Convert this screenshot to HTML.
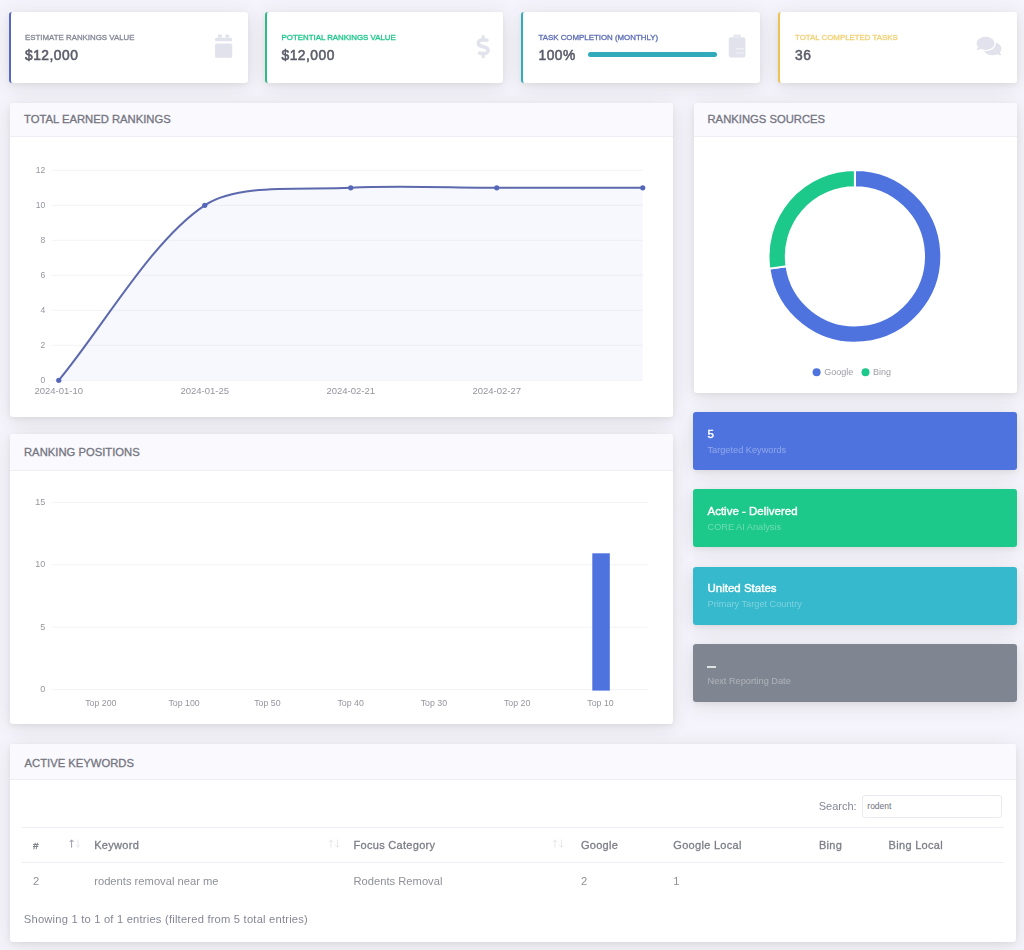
<!DOCTYPE html>
<html><head><meta charset="utf-8">
<style>
*{box-sizing:border-box;margin:0;padding:0}
html,body{width:1024px;height:950px;overflow:hidden}
body{background:#f5f4fc;font-family:"Liberation Sans",sans-serif;color:#858796;position:relative}
.abs{position:absolute}
.card{position:absolute;background:#fff;border-radius:3px;box-shadow:0 2px 5px rgba(62,64,40,.07),0 3px 20px rgba(62,64,40,.12)}
.bl{border-left:2.5px solid}
.lbl{position:absolute;font-size:7.88px;font-weight:normal;-webkit-text-stroke-width:.3px;text-transform:uppercase;white-space:nowrap;line-height:1}
.val{position:absolute;font-size:13.8px;font-weight:normal;-webkit-text-stroke-width:.55px;color:#5a5c69;white-space:nowrap;letter-spacing:.5px;line-height:1}
.hdr{position:absolute;left:0;top:0;right:0;background:#f9f9fe;border-bottom:1px solid #eceef3;border-radius:3px 3px 0 0}
.htxt{position:absolute;left:14.5px;font-size:11.25px;font-weight:normal;-webkit-text-stroke-width:.3px;color:#747580;white-space:nowrap;text-transform:uppercase;line-height:1}
.ax{position:absolute;font-size:8.5px;color:#94959f;white-space:nowrap;line-height:11px}
.ya{text-align:right}
.xa{width:60px;text-align:center}
.cc{position:absolute;left:693px;width:323.5px;height:58.3px;border-radius:3px;color:#fff;box-shadow:0 2px 5px rgba(62,64,40,.07),0 3px 20px rgba(62,64,40,.12)}
.cc .t{position:absolute;left:14.5px;top:16.6px;font-size:11.5px;font-weight:normal;-webkit-text-stroke-width:.4px;white-space:nowrap;line-height:1}
.cc .s{position:absolute;left:14.5px;top:33.5px;font-size:9.2px;color:rgba(255,255,255,.36);white-space:nowrap;line-height:1}
.th{position:absolute;top:840px;font-size:11px;font-weight:normal;-webkit-text-stroke-width:.3px;letter-spacing:.3px;color:#7c7d87;white-space:nowrap;line-height:1}
.td{position:absolute;top:876px;font-size:11.2px;color:#8f9099;white-space:nowrap;line-height:1}
svg.ov{position:absolute;left:0;top:0}
#wrap{position:absolute;left:0;top:0;width:1024px;height:950px;filter:blur(0.4px)}
</style></head><body><div id="wrap">

<!-- top cards -->
<div class="card bl" style="left:9px;top:12px;width:238.5px;height:71px;border-color:#5468c4">
  <div class="lbl" style="left:14px;top:22px;color:#858796">Estimate Rankings Value</div>
  <div class="val" style="left:14px;top:37px">$12,000</div>
</div>
<div class="card bl" style="left:265px;top:12px;width:238px;height:71px;border-color:#2dba84">
  <div class="lbl" style="left:14.5px;top:22px;color:#1cc88a">Potential Rankings Value</div>
  <div class="val" style="left:14.5px;top:37px">$12,000</div>
</div>
<div class="card bl" style="left:521px;top:12px;width:238.5px;height:71px;border-color:#33abb8">
  <div class="lbl" style="left:15.5px;top:22px;color:#5b6cb5">Task Completion (Monthly)</div>
  <div class="val" style="left:15.5px;top:37px">100%</div>
  <div class="abs" style="left:64.7px;top:39.8px;width:129.3px;height:5.5px;border-radius:3px;background:#31abbb"></div>
</div>
<div class="card bl" style="left:777.5px;top:12px;width:239px;height:71px;border-color:#ebc354">
  <div class="lbl" style="left:15.5px;top:22px;color:#f1d074">Total Completed Tasks</div>
  <div class="val" style="left:15.5px;top:37px">36</div>
</div>

<!-- chart card -->
<div class="card" style="left:9.5px;top:102.5px;width:663.5px;height:314px">
  <div class="hdr" style="height:34px"><div class="htxt" style="top:11.8px">Total Earned Rankings</div></div>
</div>

<!-- sources card -->
<div class="card" style="left:694px;top:102.5px;width:322.5px;height:290px">
  <div class="hdr" style="height:34px"><div class="htxt" style="top:11.8px;left:13.5px">Rankings Sources</div></div>
</div>

<!-- colored cards -->
<div class="cc" style="top:412.2px;background:#4e73df"><div class="t">5</div><div class="s">Targeted Keywords</div></div>
<div class="cc" style="top:489.2px;background:#1cc88a"><div class="t">Active - Delivered</div><div class="s">CORE AI Analysis</div></div>
<div class="cc" style="top:566.5px;background:#36b9cc"><div class="t">United States</div><div class="s">Primary Target Country</div></div>
<div class="cc" style="top:643.8px;background:#808691"><div class="abs" style="left:14px;top:22.4px;width:8.5px;height:1.8px;background:rgba(255,255,255,.75)"></div><div class="s">Next Reporting Date</div></div>

<!-- ranking positions -->
<div class="card" style="left:9.5px;top:434px;width:663.5px;height:290px">
  <div class="hdr" style="height:36.5px"><div class="htxt" style="top:13px">Ranking Positions</div></div>
</div>

<!-- active keywords -->
<div class="card" style="left:10px;top:744px;width:1006px;height:197.5px">
  <div class="hdr" style="height:36px"><div class="htxt" style="top:14px">Active Keywords</div></div>
</div>

<!-- table -->
<div class="abs" style="left:818.7px;top:801px;font-size:11px;color:#858796;line-height:1">Search:</div>
<div class="abs" style="left:862px;top:795.3px;width:140.4px;height:22.3px;border:1px solid #e8eaf0;border-radius:3px;background:#fff"></div>
<div class="abs" style="left:867.3px;top:802px;font-size:8.5px;color:#6e707e;line-height:1">rodent</div>
<div class="abs" style="left:22px;top:827px;width:982px;height:1px;background:#edeff4"></div>
<div class="abs" style="left:22px;top:862px;width:982px;height:1px;background:#edeff4"></div>
<div class="th" style="left:33px;top:840.8px;font-size:9.8px;letter-spacing:0">#</div>
<div class="th" style="left:94.2px">Keyword</div>
<div class="th" style="left:353.5px">Focus Category</div>
<div class="th" style="left:580.9px">Google</div>
<div class="th" style="left:673.3px">Google Local</div>
<div class="th" style="left:818.9px">Bing</div>
<div class="th" style="left:888.6px">Bing Local</div>
<div class="td" style="left:33px">2</div>
<div class="td" style="left:94.2px">rodents removal near me</div>
<div class="td" style="left:353.5px">Rodents Removal</div>
<div class="td" style="left:580.9px">2</div>
<div class="td" style="left:673.3px">1</div>
<div class="abs" style="left:23.8px;top:914px;font-size:11.2px;color:#858796;line-height:1;letter-spacing:.2px">Showing 1 to 1 of 1 entries (filtered from 5 total entries)</div>

<div class="ax ya" style="top:374.8px;right:978.8px">0</div>
<div class="ax ya" style="top:339.8px;right:978.8px">2</div>
<div class="ax ya" style="top:304.8px;right:978.8px">4</div>
<div class="ax ya" style="top:269.8px;right:978.8px">6</div>
<div class="ax ya" style="top:234.8px;right:978.8px">8</div>
<div class="ax ya" style="top:199.8px;right:978.8px">10</div>
<div class="ax ya" style="top:164.8px;right:978.8px">12</div>
<div class="ax xa" style="top:385.3px;left:28.8px;font-size:9.5px">2024-01-10</div>
<div class="ax xa" style="top:385.3px;left:174.8px;font-size:9.5px">2024-01-25</div>
<div class="ax xa" style="top:385.3px;left:320.8px;font-size:9.5px">2024-02-21</div>
<div class="ax xa" style="top:385.3px;left:466.8px;font-size:9.5px">2024-02-27</div>
<div class="ax ya" style="top:684.1px;right:978.8px;font-size:9px">0</div>
<div class="ax ya" style="top:621.7px;right:978.8px;font-size:9px">5</div>
<div class="ax ya" style="top:559.3px;right:978.8px;font-size:9px">10</div>
<div class="ax ya" style="top:496.9px;right:978.8px;font-size:9px">15</div>
<div class="ax xa" style="top:697.9px;left:70.8px;font-size:8.8px">Top 200</div>
<div class="ax xa" style="top:697.9px;left:154.1px;font-size:8.8px">Top 100</div>
<div class="ax xa" style="top:697.9px;left:237.4px;font-size:8.8px">Top 50</div>
<div class="ax xa" style="top:697.9px;left:320.6px;font-size:8.8px">Top 40</div>
<div class="ax xa" style="top:697.9px;left:403.9px;font-size:8.8px">Top 30</div>
<div class="ax xa" style="top:697.9px;left:487.2px;font-size:8.8px">Top 20</div>
<div class="ax xa" style="top:697.9px;left:570.5px;font-size:8.8px">Top 10</div>
<div class="ax" style="left:824.2px;top:366.5px;font-size:9px;color:#9c9da6">Google</div>
<div class="ax" style="left:873px;top:366.5px;font-size:9px;color:#9c9da6">Bing</div>

<svg class="ov" width="1024" height="950" viewBox="0 0 1024 950">
<line x1="51.6" y1="380.30" x2="643" y2="380.30" stroke="#f3f3f8" stroke-width="1"/>
<line x1="51.6" y1="345.30" x2="643" y2="345.30" stroke="#f3f3f8" stroke-width="1"/>
<line x1="51.6" y1="310.30" x2="643" y2="310.30" stroke="#f3f3f8" stroke-width="1"/>
<line x1="51.6" y1="275.30" x2="643" y2="275.30" stroke="#f3f3f8" stroke-width="1"/>
<line x1="51.6" y1="240.30" x2="643" y2="240.30" stroke="#f3f3f8" stroke-width="1"/>
<line x1="51.6" y1="205.30" x2="643" y2="205.30" stroke="#f3f3f8" stroke-width="1"/>
<line x1="51.6" y1="170.30" x2="643" y2="170.30" stroke="#f3f3f8" stroke-width="1"/>
<path d="M58.75,380.30 C102.55,327.80 151.50,240.40 204.75,205.30 C239.10,182.65 306.79,190.43 350.75,187.80 C394.39,185.18 452.95,187.80 496.75,187.80 C540.55,187.80 598.95,187.80 642.75,187.80 L642.75,380.30 L58.75,380.30 Z" fill="rgba(78,115,223,0.05)"/>
<path d="M58.75,380.30 C102.55,327.80 151.50,240.40 204.75,205.30 C239.10,182.65 306.79,190.43 350.75,187.80 C394.39,185.18 452.95,187.80 496.75,187.80 C540.55,187.80 598.95,187.80 642.75,187.80" fill="none" stroke="#5d69ad" stroke-width="2"/>
<circle cx="58.75" cy="380.30" r="2.6" fill="#5567b8"/>
<circle cx="204.75" cy="205.30" r="2.6" fill="#5567b8"/>
<circle cx="350.75" cy="187.80" r="2.6" fill="#5567b8"/>
<circle cx="496.75" cy="187.80" r="2.6" fill="#5567b8"/>
<circle cx="642.75" cy="187.80" r="2.6" fill="#5567b8"/>
<line x1="51.6" y1="689.60" x2="647.6" y2="689.60" stroke="#f3f3f8" stroke-width="1"/>
<line x1="51.6" y1="627.20" x2="647.6" y2="627.20" stroke="#f3f3f8" stroke-width="1"/>
<line x1="51.6" y1="564.80" x2="647.6" y2="564.80" stroke="#f3f3f8" stroke-width="1"/>
<line x1="51.6" y1="502.40" x2="647.6" y2="502.40" stroke="#f3f3f8" stroke-width="1"/>
<rect x="592.3" y="553.3" width="17.5" height="137.30" fill="#4e73df"/>
<path d="M854.90,169.90 A86.4,86.4 0 1 1 769.38,268.62 L786.51,266.16 A69.1,69.1 0 1 0 854.90,187.20 Z" fill="#4e73df" stroke="#fff" stroke-width="2"/>
<path d="M769.38,268.62 A86.4,86.4 0 0 1 854.90,169.90 L854.90,187.20 A69.1,69.1 0 0 0 786.51,266.16 Z" fill="#1cc88a" stroke="#fff" stroke-width="2"/>
<circle cx="816.6" cy="372.2" r="4" fill="#4e73df"/>
<circle cx="865.5" cy="372.2" r="4" fill="#1cc88a"/>
<g fill="#e1e2ec"><rect x="218" y="34.6" width="3.8" height="3.2" rx="0.8"/><rect x="225.4" y="34.6" width="3.8" height="3.2" rx="0.8"/><rect x="215" y="37.8" width="17.2" height="3.5" rx="1.6"/><rect x="215" y="43.6" width="17.2" height="14.2" rx="1.9"/></g>
<path transform="translate(476.6,35.3) scale(0.0458,0.0447)" fill="#e1e2ec" d="M209.2 233.4l-108-31.6C88.7 198.2 80 186.5 80 173.5c0-16.3 13.2-29.5 29.5-29.5h66.3c12.2 0 24.2 3.7 34.2 10.5 6.1 4.1 14.3 3.1 19.5-2l34.8-34c7.1-6.9 6.1-18.4-1.8-24.5C238 74.8 207.4 64.1 176 64V16c0-8.8-7.2-16-16-16h-32c-8.8 0-16 7.2-16 16v48h-2.5C45.8 64-5.4 118.7.5 183.6c4.2 46.1 39.4 83.6 83.8 96.6l102.5 30c12.5 3.7 21.2 15.3 21.2 28.3 0 16.3-13.2 29.5-29.5 29.5h-66.3C100 368 88 364.3 78 357.5c-6.1-4.1-14.3-3.1-19.5 2l-34.8 34c-7.1 6.9-6.1 18.4 1.8 24.5 24.5 19.2 55.1 29.9 86.5 30v48c0 8.8 7.2 16 16 16h32c8.8 0 16-7.2 16-16v-48.2c46.6-.9 90.3-28.6 105.7-72.7 21.5-61.6-14.6-124.8-72.5-141.7z"/>
<g><rect x="728.8" y="37.2" width="16.6" height="20.4" rx="2" fill="#e1e2ec"/><rect x="733.2" y="34.6" width="7.8" height="4" rx="1.5" fill="#e6e7ef"/><rect x="736" y="48.2" width="8" height="1.4" fill="#eff0f6"/><rect x="736" y="52.4" width="8" height="1.2" fill="#eceef4"/></g>
<path transform="translate(976.6,35.3) scale(0.0432,0.0415)" fill="#e1e2ec" d="M416 192c0-88.4-93.1-160-208-160S0 103.6 0 192c0 34.3 14.1 65.9 38 92-13.4 30.2-35.5 54.2-35.8 54.5-2.2 2.3-2.8 5.7-1.5 8.7S4.8 352 8 352c36.6 0 66.9-12.3 88.7-25 32.2 15.7 70.3 25 111.3 25 114.9 0 208-71.6 208-160zm122 220c23.9-26 38-57.7 38-92 0-66.9-53.5-124.2-129.3-148.1.9 6.6 1.3 13.3 1.3 20.1 0 105.9-107.7 192-240 192-10.8 0-21.3-.8-31.7-1.9C207.8 439.6 281.8 480 368 480c41 0 79.1-9.2 111.3-25 21.8 12.7 52.1 25 88.7 25 3.2 0 6.1-1.9 7.3-4.8 1.3-2.9.7-6.3-1.5-8.7-.3-.3-22.4-24.2-35.8-54.5z"/>
<!-- sort arrows -->
<g stroke-width="1" fill="none">
<path d="M71.6,847.7 V840 M69.6,842 L71.6,839.8 L73.6,842" stroke="#9a9cab"/>
<path d="M78,839.5 V847.2 M76,845.2 L78,847.4 L80,845.2" stroke="#e6e7ee"/>
<path d="M331,847.7 V840 M329,842 L331,839.8 L333,842" stroke="#e6e7ee"/>
<path d="M337.4,839.5 V847.2 M335.4,845.2 L337.4,847.4 L339.4,845.2" stroke="#e6e7ee"/>
<path d="M555,847.7 V840 M553,842 L555,839.8 L557,842" stroke="#e6e7ee"/>
<path d="M561.4,839.5 V847.2 M559.4,845.2 L561.4,847.4 L563.4,845.2" stroke="#e6e7ee"/>
</g>

</svg>

</div></body></html>
